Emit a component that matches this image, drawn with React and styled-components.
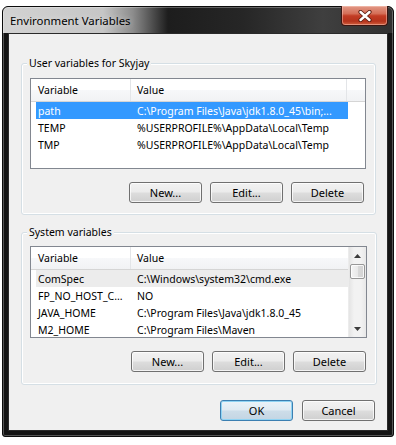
import React from 'react';
import styled, { createGlobalStyle, css } from 'styled-components';

const GlobalStyle = createGlobalStyle`
  html, body {
    margin: 0;
    padding: 0;
    background: #fff;
  }
  body {
    font-family: "Noto Sans", "Liberation Sans", sans-serif;
    font-size: 10.5px;
    color: #000;
  }
`;

// window frame

const Window = styled.div`
  box-sizing: border-box;
  width: 392px;
  height: 431px;
  margin: 6px 0 0 2px;
  display: flex;
  flex-direction: column;
  padding: 0 5px 5px;
  border: 1px solid #0c0c0c;
  border-radius: 6px 6px 3px 3px;
  background:
    linear-gradient(90deg, #d2d2d2 0, #c6c6c6 100px, #8c8c8c 130px, #1d1d1d 165px, #262626 240px, #3f3f3f 320px, #303030 100%) top / 100% 26px no-repeat,
    #141414;
  box-shadow: inset 0 0 0 1px rgba(255, 255, 255, 0.28);
`;

const TitleBar = styled.div`
  height: 26px;
  display: flex;
  align-items: center;
  justify-content: space-between;
  padding-left: 2px;
`;

const Title = styled.span`
  font-size: 11.4px;
  color: #000;
  text-shadow: 0 0 6px rgba(255, 255, 255, 0.6);
`;

const CloseButton = styled.div`
  align-self: flex-start;
  margin-top: -1px;
  width: 47px;
  height: 20px;
  box-sizing: border-box;
  display: flex;
  align-items: center;
  justify-content: center;
  border: 1px solid #3b1510;
  border-top: none;
  border-radius: 0 0 4px 4px;
  background: linear-gradient(#e29a88 0%, #d56e57 40%, #c23c24 52%, #b5331c 80%, #d0603f 100%);
  box-shadow: inset 0 0 0 1px rgba(255, 210, 200, 0.45);
`;

const Client = styled.div`
  flex: 1;
  display: flex;
  flex-direction: column;
  background: #f0f0f0;
  border: 1px solid #2a2a2a;
`;

// group boxes

const Group = styled.fieldset`
  margin: ${p => p.$top}px 11px 0 12px;
  padding: 0;
  border: 1px solid #d5dfe5;
  border-radius: 3px;
  box-shadow: inset 0 0 0 1px #fff;
  display: flex;
  flex-direction: column;
`;

const Legend = styled.legend`
  margin-left: 5px;
  padding: 0 2px;
  line-height: 14px;
  background: #f0f0f0;
`;

const GroupBody = styled.div`
  padding: ${p => p.$pt}px 9px ${p => p.$pb}px 8px;
  display: flex;
  flex-direction: column;
`;

// list view

const ListBox = styled.div`
  height: ${p => p.$h}px;
  box-sizing: border-box;
  border: 1px solid #828790;
  background: #fff;
  display: flex;
  overflow: hidden;
`;

const ListMain = styled.div`
  flex: 1;
  display: flex;
  flex-direction: column;
  min-width: 0;
`;

const Header = styled.div`
  height: 23px;
  flex: none;
  box-sizing: border-box;
  display: flex;
  border-bottom: 1px solid #d5d5d5;
  background: linear-gradient(#ffffff 0%, #ffffff 50%, #f7f8fa 51%, #f1f2f4 100%);
`;

const HeadCell = styled.div`
  width: ${p => p.$w ? `${p.$w}px` : 'auto'};
  flex: ${p => p.$w ? 'none' : '1'};
  box-sizing: border-box;
  padding-left: ${p => p.$pl || 0}px;
  display: flex;
  align-items: center;
  border-right: ${p => p.$last ? 'none' : '1px solid #e3e5e8'};
`;

const Row = styled.div`
  height: 17px;
  flex: none;
  display: flex;
  align-items: center;
  margin-left: 5px;
  width: 312px;
  white-space: nowrap;
  ${p => p.$state === 'selected' && css`
    background: #3399ff;
    color: #fff;
  `}
  ${p => p.$state === 'hot' && css`
    background: #ececec;
  `}
`;

const Cell = styled.div`
  width: ${p => p.$w ? `${p.$w}px` : 'auto'};
  flex: ${p => p.$w ? 'none' : '1'};
  box-sizing: border-box;
  padding-left: ${p => p.$pl}px;
  overflow: hidden;
`;

// scrollbar

const ScrollBar = styled.div`
  width: 17px;
  flex: none;
  display: flex;
  flex-direction: column;
  background: linear-gradient(90deg, #e4e4e4 0%, #f2f2f2 30%, #f2f2f2 70%, #e8e8e8 100%);
  border-left: 1px solid #ececec;
`;

const ArrowBox = styled.div`
  height: 17px;
  flex: none;
  display: flex;
  align-items: center;
  justify-content: center;
`;

const Thumb = styled.div`
  height: 15px;
  margin: 0 1px;
  box-sizing: border-box;
  border: 1px solid #979797;
  border-radius: 2px;
  background: linear-gradient(90deg, #f4f4f4 0%, #e9e9e9 50%, #d9d9d9 51%, #d2d2d2 100%);
  box-shadow: inset 0 0 0 1px rgba(255, 255, 255, 0.8);
`;

const Track = styled.div`
  flex: 1;
`;

// buttons

const ButtonRow = styled.div`
  display: flex;
  justify-content: flex-end;
  gap: ${p => p.$gap}px;
  margin-top: ${p => p.$mt}px;
  padding-right: ${p => p.$pr || 0}px;
`;

const Button = styled.button`
  box-sizing: border-box;
  width: 73px;
  height: 21px;
  padding: 0;
  font: inherit;
  font-size: 11px;
  color: #000;
  border: 1px solid #707070;
  border-radius: 3px;
  background: linear-gradient(#f2f2f2 0%, #ebebeb 48%, #dddddd 52%, #cfcfcf 100%);
  box-shadow: inset 0 0 0 1px rgba(255, 255, 255, 0.75);
  ${p => p.$default && css`
    border-color: #3c7fb1;
    background: linear-gradient(#eaf3f9 0%, #dfeaf2 48%, #cddde9 52%, #c3d5e3 100%);
    box-shadow: inset 0 0 0 1px #8fd3f3;
  `}
`;

const userVars = [
  ['path', 'C:\\Program Files\\Java\\jdk1.8.0_45\\bin;...', 'selected'],
  ['TEMP', '%USERPROFILE%\\AppData\\Local\\Temp'],
  ['TMP', '%USERPROFILE%\\AppData\\Local\\Temp'],
];

const sysVars = [
  ['ComSpec', 'C:\\Windows\\system32\\cmd.exe', 'hot'],
  ['FP_NO_HOST_C...', 'NO'],
  ['JAVA_HOME', 'C:\\Program Files\\Java\\jdk1.8.0_45'],
  ['M2_HOME', 'C:\\Program Files\\Maven'],
];

function Arrow({ up }) {
  return (
    <svg width="7" height="4" viewBox="0 0 7 4">
      <path d={up ? 'M0 4 L3.5 0 L7 4 Z' : 'M0 0 L3.5 4 L7 0 Z'} fill="#3c3c3c" />
    </svg>
  );
}

function VarList({ rows, height, scroll }) {
  return (
    <ListBox $h={height}>
      <ListMain>
        <Header>
          <HeadCell $w={100} $pl={7}>Variable</HeadCell>
          <HeadCell $w={216} $pl={6} $last={scroll}>Value</HeadCell>
          {!scroll && <HeadCell $last />}
        </Header>
        {rows.map(([name, value, state]) => (
          <Row key={name} $state={state}>
            <Cell $w={95} $pl={2}>{name}</Cell>
            <Cell $pl={6}>{value}</Cell>
          </Row>
        ))}
      </ListMain>
      {scroll && (
        <ScrollBar>
          <ArrowBox><Arrow up /></ArrowBox>
          <Thumb />
          <Track />
          <ArrowBox><Arrow /></ArrowBox>
        </ScrollBar>
      )}
    </ListBox>
  );
}

export default function App() {
  return (
    <>
      <GlobalStyle />
      <Window>
        <TitleBar>
          <Title>Environment Variables</Title>
          <CloseButton>
            <svg width="14" height="12" viewBox="0 0 14 12">
              <path d="M2.5 2 L11.5 10 M11.5 2 L2.5 10" stroke="#5a1d12" strokeWidth="4.2" strokeLinecap="round" />
              <path d="M2.5 2 L11.5 10 M11.5 2 L2.5 10" stroke="#fff" strokeWidth="2.4" strokeLinecap="round" />
            </svg>
          </CloseButton>
        </TitleBar>
        <Client>
          <Group $top={22}>
            <Legend>User variables for Skyjay</Legend>
            <GroupBody $pt={8} $pb={11}>
              <VarList rows={userVars} height={91} />
              <ButtonRow $gap={8} $mt={13} $pr={2}>
                <Button>New...</Button>
                <Button>Edit...</Button>
                <Button>Delete</Button>
              </ButtonRow>
            </GroupBody>
          </Group>
          <Group $top={10}>
            <Legend>System variables</Legend>
            <GroupBody $pt={7} $pb={12}>
              <VarList rows={sysVars} height={92} scroll />
              <ButtonRow $gap={8} $mt={13} $pr={1}>
                <Button>New...</Button>
                <Button>Edit...</Button>
                <Button>Delete</Button>
              </ButtonRow>
            </GroupBody>
          </Group>
          <ButtonRow $gap={9} $mt={15} $pr={12}>
            <Button $default>OK</Button>
            <Button>Cancel</Button>
          </ButtonRow>
        </Client>
      </Window>
    </>
  );
}
